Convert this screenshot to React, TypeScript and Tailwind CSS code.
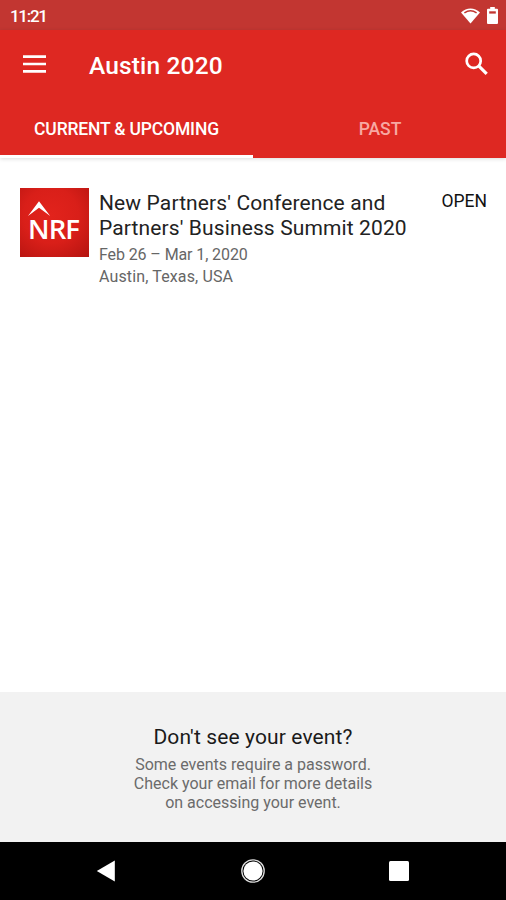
import type { ReactNode } from 'react';

const TABS = [
  { label: 'Current & Upcoming', active: true },
  { label: 'Past', active: false },
];

const EVENTS = [
  {
    title: ["New Partners' Conference and", "Partners' Business Summit 2020"],
    dates: 'Feb 26 – Mar 1, 2020',
    location: 'Austin, Texas, USA',
  },
];

function StatusBar() {
  return (
    <div className="flex h-[30px] shrink-0 items-center justify-between bg-[#c23631] pl-[10px] pr-2 text-white">
      <span className="pt-px text-[17px] font-medium leading-5 tracking-[-1.3px]">11:21</span>
      <div className="flex items-center gap-[7px]">
        <svg width="19" height="17" viewBox="0 0 19 17">
          <path d="M9.5 16.5 0 5.4C5.6.3 13.4.3 19 5.4Z" fill="#fff" />
          <path d="M3.4 5.8c3.8-2.5 8.4-2.5 12.2 0" fill="none" stroke="#c23631" strokeWidth="1.5" />
        </svg>
        <svg width="11" height="17" viewBox="0 0 11 17">
          <path d="M3.2 0h4.6v1.8H10a1 1 0 0 1 1 1V16a1 1 0 0 1-1 1H1a1 1 0 0 1-1-1V2.8a1 1 0 0 1 1-1h2.2Z" fill="#fff" />
          <path d="M2.2 4.3h6.600v2.300H2.200Z" fill="#c23631" />
        </svg>
      </div>
    </div>
  );
}

function AppBar() {
  return (
    <header className="shrink-0 bg-[#de2822] text-white shadow-[0_1px_4px_rgba(0,0,0,0.14)]">
      <div className="flex h-[70px] items-center pl-[23px] pr-[18px]">
        <button className="mr-[43px]" aria-label="Menu">
          <svg width="23" height="18" viewBox="0 0 23 18" className="mb-0.5 block">
            <path d="M0 1.600h23M0 9h23M0 16.400h23" stroke="#fff" strokeWidth="2.700" />
          </svg>
        </button>
        <h1 className="flex-1 pt-0.5 text-[24.5px] font-medium leading-8 tracking-[0.15px]">Austin 2020</h1>
        <button aria-label="Search">
          <svg width="23" height="23" viewBox="0 0 23 23" className="mb-1 block" fill="none" stroke="#fff">
            <circle cx="8.700" cy="8.900" r="7" strokeWidth="2.700" />
            <path d="m13.700 13.900 8 8" strokeWidth="3.200" />
          </svg>
        </button>
      </div>
      <nav className="grid h-[58px] grid-cols-2">
        {TABS.map((tab) => (
          <Tab key={tab.label} active={tab.active}>
            {tab.label}
          </Tab>
        ))}
      </nav>
    </header>
  );
}

function Tab({ active, children }: { active: boolean; children: ReactNode }) {
  return (
    <button
      className={
        active
          ? 'border-b-3 border-white pt-1 text-[17.5px] font-medium uppercase tracking-[-0.17px] text-white'
          : 'border-b-3 border-transparent pl-px pt-1 text-[17.5px] font-medium uppercase text-[#f7a8a3]'
      }
    >
      {children}
    </button>
  );
}

function NrfLogo() {
  return (
    <svg width="69" height="69" viewBox="0 0 69 69" className="shrink-0">
      <defs>
        <radialGradient id="nrf" cx="0.45" cy="0.4" r="0.8">
          <stop offset="0" stopColor="#e2231c" />
          <stop offset="0.5" stopColor="#d91f19" />
          <stop offset="1" stopColor="#b51410" />
        </radialGradient>
      </defs>
      <rect width="69" height="69" fill="url(#nrf)" />
      <path d="M19 13.200 30.200 28 19 19.700 8 28Z" fill="#fff" />
      <text
        x="8"
        y="50.500"
        fill="#fff"
        className="font-['Open_Sans',sans-serif] text-[27.5px] font-semibold tracking-[-0.9px]"
      >
        NRF
      </text>
    </svg>
  );
}

function EventRow({ event }: { event: (typeof EVENTS)[number] }) {
  return (
    <article className="flex items-start pl-5 pr-[19px]">
      <NrfLogo />
      <div className="ml-2.5 flex-1 whitespace-nowrap pt-[3px]">
        <h2 className="text-[21px] leading-[25px] tracking-[0.12px] text-[#222]">
          {event.title[0]}
          <br />
          {event.title[1]}
        </h2>
        <p className="mt-[3px] text-[16px] leading-[22px] text-[#666]">
          <span className="tracking-[-0.1px]">{event.dates}</span>
          <br />
          <span className="tracking-[0.13px]">{event.location}</span>
        </p>
      </div>
      <button className="pt-[3px] text-[17.5px] leading-5 text-[#111]">OPEN</button>
    </article>
  );
}

function EventHelp() {
  return (
    <section className="h-[150px] shrink-0 bg-[#f2f2f2] pt-8 text-center">
      <h3 className="text-[21px] leading-[26px] tracking-[0.12px] text-[#1a1a1a]">Don't see your event?</h3>
      <p className="mt-[5px] text-[16px] leading-[19px] text-[#6b6b6b]">
        Some events require a password.
        <br />
        Check your email for more details
        <br />
        on accessing your event.
      </p>
    </section>
  );
}

function NavigationBar() {
  return (
    <nav className="flex h-[58px] shrink-0 items-center justify-between bg-black pl-[96px] pr-[97px]">
      <svg width="20" height="22" viewBox="0 0 20 22">
        <path d="M18.800 0.500v21L0.800 11Z" fill="#fff" />
      </svg>
      <svg width="24" height="24" viewBox="0 0 24 24" className="ml-px">
        <circle cx="12" cy="12" r="11.200" fill="none" stroke="#ddd" strokeWidth="1.300" />
        <circle cx="12" cy="12" r="9.600" fill="#fff" />
      </svg>
      <svg width="20" height="20" viewBox="0 0 20 20">
        <rect width="20" height="20" rx="1.500" fill="#fff" />
      </svg>
    </nav>
  );
}

export default function App() {
  return (
    <div className="flex h-[900px] w-[506px] flex-col overflow-hidden bg-white font-['Roboto',sans-serif]">
      <StatusBar />
      <AppBar />
      <main className="flex-1 pt-[30px]">
        {EVENTS.map((event) => (
          <EventRow key={event.dates} event={event} />
        ))}
      </main>
      <EventHelp />
      <NavigationBar />
    </div>
  );
}
